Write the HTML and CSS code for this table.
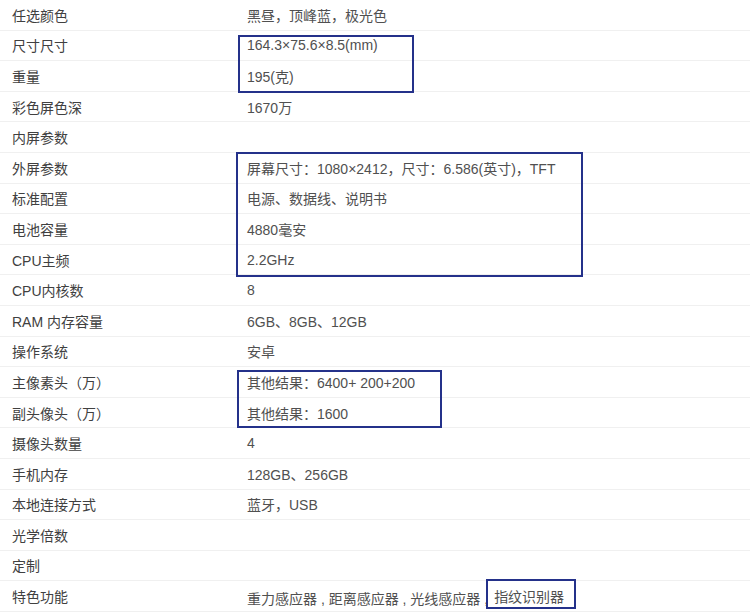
FILE: index.html
```html
<!DOCTYPE html>
<html lang="zh-CN">
<head>
    <meta charset="UTF-8">
    <title>参数</title>
    <link rel="stylesheet" href="styles.css">
</head>
<body>
    <div class="spec">
        <div class="row"><div class="label">任选颜色</div><div class="value">黑昼，顶峰蓝，极光色</div></div>
        <div class="row"><div class="label">尺寸尺寸</div><div class="value">164.3×75.6×8.5(mm)</div></div>
        <div class="row"><div class="label">重量</div><div class="value">195(克)</div></div>
        <div class="row"><div class="label">彩色屏色深</div><div class="value">1670万</div></div>
        <div class="row"><div class="label">内屏参数</div><div class="value"></div></div>
        <div class="row"><div class="label">外屏参数</div><div class="value">屏幕尺寸：1080×2412，尺寸：6.586(英寸)，TFT</div></div>
        <div class="row"><div class="label">标准配置</div><div class="value">电源、数据线、说明书</div></div>
        <div class="row"><div class="label">电池容量</div><div class="value">4880毫安</div></div>
        <div class="row"><div class="label">CPU主频</div><div class="value">2.2GHz</div></div>
        <div class="row"><div class="label">CPU内核数</div><div class="value">8</div></div>
        <div class="row"><div class="label">RAM 内存容量</div><div class="value">6GB、8GB、12GB</div></div>
        <div class="row"><div class="label">操作系统</div><div class="value">安卓</div></div>
        <div class="row"><div class="label">主像素头（万）</div><div class="value">其他结果：6400+ 200+200</div></div>
        <div class="row"><div class="label">副头像头（万）</div><div class="value">其他结果：1600</div></div>
        <div class="row"><div class="label">摄像头数量</div><div class="value">4</div></div>
        <div class="row"><div class="label">手机内存</div><div class="value">128GB、256GB</div></div>
        <div class="row"><div class="label">本地连接方式</div><div class="value">蓝牙，USB</div></div>
        <div class="row"><div class="label">光学倍数</div><div class="value"></div></div>
        <div class="row"><div class="label">定制</div><div class="value"></div></div>
        <div class="row"><div class="label">特色功能</div><div class="value">重力感应器 , 距离感应器 , 光线感应器 ,<span class="mark">指纹识别器</span></div></div>

        <!-- annotation boxes -->
        <div class="box box-size"></div>
        <div class="box box-screen"></div>
        <div class="box box-camera"></div>
    </div>
</body>
</html>
```

FILE: styles.css
```css
* {
    margin: 0;
    padding: 0;
    box-sizing: border-box;
}

body {
    background: #fff;
    font-family: "Liberation Sans", "Noto Sans CJK SC", sans-serif;
    font-size: 14px;
    color: #505050;
}

.spec {
    position: relative;
    width: 750px;
}

.row {
    display: flex;
    align-items: center;
    height: 30.6px;
    border-bottom: 1px solid #f0f0f0;
}

.label {
    width: 247px;
    padding-left: 12px;
    color: #404040;
}

.value {
    flex: 1;
}

/* last row highlight sits over the comma */
.mark {
    display: inline-block;
    background: #fff;
    border: 2px solid #24318a;
    padding: 6px 10px 0 6px;
    margin-left: -2px;
    position: relative;
    top: -2px;
    line-height: 20px;
}

.box {
    position: absolute;
    border: 2px solid #24318a;
}

.box-size {
    left: 238px;
    top: 35px;
    width: 176px;
    height: 58px;
}

.box-screen {
    left: 236px;
    top: 152px;
    width: 347px;
    height: 125px;
}

.box-camera {
    left: 237px;
    top: 370px;
    width: 205px;
    height: 58px;
}
```
